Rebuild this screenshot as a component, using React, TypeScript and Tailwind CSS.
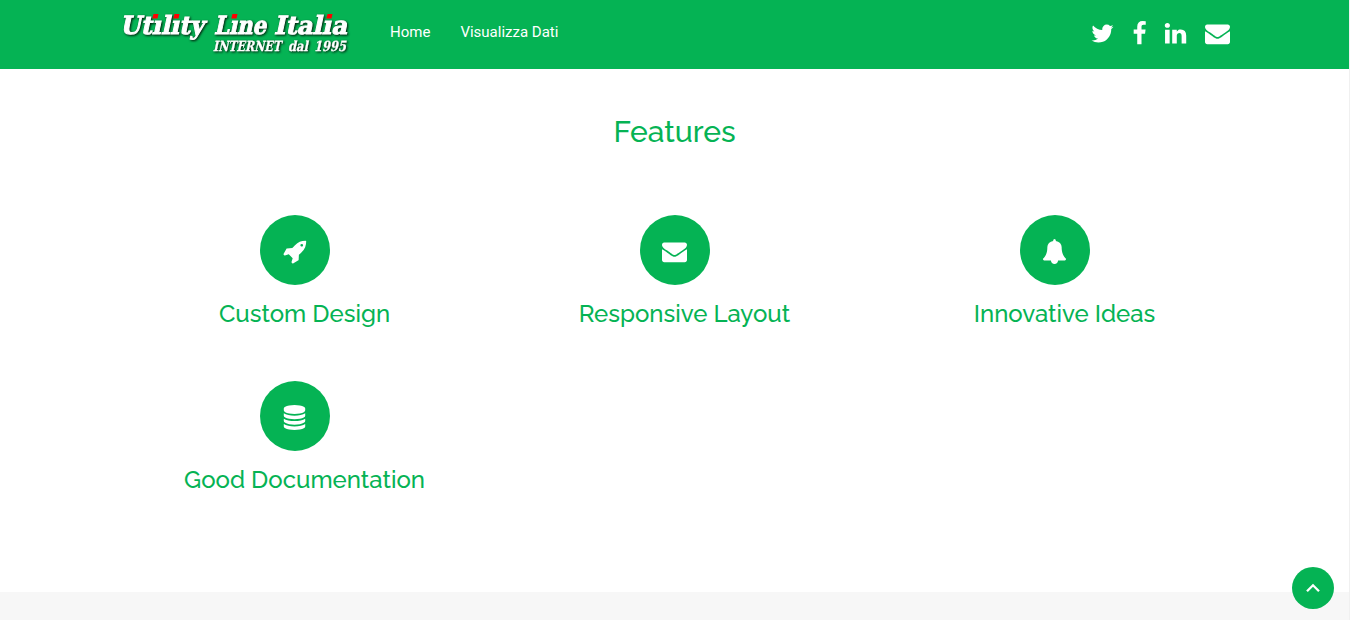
import React from "react";

const paths = {
  twitter:
    "M1684 408q-67 98-162 167 1 14 1 42 0 130-38 259.5t-115.5 248.5-184.5 210.5-258 146-323 54.5q-271 0-496-145 35 4 78 4 225 0 401-138-105-2-188-64.5t-114-159.5q33 5 61 5 43 0 85-11-112-23-185.5-111.5t-73.5-205.5v-4q68 38 146 41-66-44-105-115t-39-154q0-88 44-163 121 149 294.5 238.5t371.5 99.5q-8-38-8-74 0-134 94.5-228.5t228.5-94.5q140 0 236 102 109-21 205-78-37 115-142 178 93-10 186-50z",
  facebook:
    "M1343 12v264h-157q-86 0-116 36t-30 108v189h293l-39 296h-254v759h-306v-759h-255v-296h255v-218q0-186 104-288.5t277-102.5q147 0 228 12z",
  linkedin:
    "M477 625v991h-330v-991h330zm21-306q1 73-50.5 122t-135.5 49h-2q-82 0-132-49t-50-122q0-74 51.5-122.5t134.5-48.5 133 48.5 51 122.5zm1166 729v568h-329v-530q0-105-40.5-164.5t-126.5-59.5q-63 0-105.5 34.5t-63.5 85.5q-11 30-11 81v553h-329q2-399 2-647t-1-296l-1-48h329v144h-2q20-32 41-56t56.5-52 87-43.5 114.5-15.5q171 0 275 113.5t104 332.5z",
  envelope:
    "M1792 710v794q0 66-47 113t-113 47h-1472q-66 0-113-47t-47-113v-794q44 49 101 87 362 246 497 345 57 42 92.5 65.5t94.5 48 110 24.5h2q51 0 110-24.5t94.5-48 92.5-65.5q170-123 498-345 57-39 100-87zm0-294q0 79-49 151t-122 123q-376 261-468 325-10 7-42.5 31t-54 38.5-52 32.5-57.5 27-50 9h-2q-23 0-50-9t-57.5-27-52-32.5-54-38.5-42.5-31q-91-64-262-182.5t-205-142.5q-62-42-117-115.5t-55-136.5q0-78 41.5-130t118.5-52h1472q65 0 112.5 47t47.5 113z",
  rocket:
    "M1440 448q0-40-28-68t-68-28-68 28-28 68 28 68 68 28 68-28 28-68zm224-288q0 249-75.5 430.5t-253.5 360.5q-81 80-195 176l-20 379q-2 16-16 26l-384 224q-7 4-16 4-12 0-23-9l-64-64q-13-14-8-32l85-276-281-281-276 85q-3 1-9 1-14 0-23-9l-64-64q-17-19-5-39l224-384q10-14 26-16l379-20q96-114 176-195 188-187 358-258t431-71q14 0 24 9.5t10 22.5z",
  bell:
    "M1728 1408q0 52-38 90t-90 38h-448q0 106-75 181t-181 75-181-75-75-181h-448q-52 0-90-38t-38-90q50-42 91-88t85-119.5 74.5-158.5 50-206 19.5-260q0-152 117-282.5t307-158.5q-8-19-8-39 0-40 28-68t68-28 68 28 28 68q0 20-8 39 190 28 307 158.5t117 282.5q0 139 19.5 260t50 206 74.5 158.5 85 119.5 91 88z",
  database:
    "M896 768q237 0 443-43t325-127v170q0 69-103 128t-280 93.5-385 34.5-385-34.5-280-93.5-103-128v-170q119 84 325 127t443 43zm0 768q237 0 443-43t325-127v170q0 69-103 128t-280 93.5-385 34.5-385-34.5-280-93.5-103-128v-170q119 84 325 127t443 43zm0-384q237 0 443-43t325-127v170q0 69-103 128t-280 93.5-385 34.5-385-34.5-280-93.5-103-128v-170q119 84 325 127t443 43zm0-1152q208 0 385 34.5t280 93.5 103 128v128q0 69-103 128t-280 93.5-385 34.5-385-34.5-280-93.5-103-128v-128q0-69 103-128t280-93.5 385-34.5z",
};

type IconName = keyof typeof paths;

function Icon({ name, className = "" }: { name: IconName; className?: string }) {
  return (
    <svg viewBox="0 0 1792 1792" className={`h-[25px] w-[25px] shrink-0 fill-white ${className}`}>
      <path d={paths[name]} />
    </svg>
  );
}

const words = [
  { text: "Utılıty", x: 1, y: 25.5, width: 84, size: 25 },
  { text: "Lıne", x: 95, y: 25.5, width: 52, size: 25 },
  { text: "Italıa", x: 155, y: 25.5, width: 73, size: 25 },
  { text: "INTERNET", x: 94, y: 43, width: 68, size: 14 },
  { text: "dal", x: 169, y: 43, width: 20, size: 14 },
  { text: "1995", x: 195, y: 43, width: 32, size: 14 },
];

function Logo() {
  return (
    <svg viewBox="0 0 232 52" className="h-[52px] w-[232px] shrink-0" aria-label="Utility Line Italia">
      <g
        className="drop-shadow-[1.8px_1.8px_0.8px_#021a0a]"
        fontFamily='"DejaVu Serif Condensed", "DejaVu Serif", serif'
        fontWeight="bold"
      >
        {words.map((w) => (
          <text
            key={w.text}
            className={w.size > 20 ? "fill-white stroke-white stroke-[0.9]" : "fill-white stroke-white stroke-[0.3]"}
            transform={`translate(${w.x} ${w.y}) skewX(-12)`}
            fontSize={w.size}
            textLength={w.width}
            lengthAdjust="spacingAndGlyphs"
          >
            {w.text}
          </text>
        ))}
      </g>
      <g className="fill-[#ff0000]">
        {[33, 54, 112, 207].map((x) => (
          <path key={x} d={`M${x + 1.5} 6h5l-1 4.6h-5.2z`} />
        ))}
      </g>
    </svg>
  );
}

const features: { icon: IconName; title: string; offset: string }[] = [
  { icon: "rocket", title: "Custom Design", offset: "mt-[3px] ml-[2px]" },
  { icon: "envelope", title: "Responsive Layout", offset: "mt-[3px]" },
  { icon: "bell", title: "Innovative Ideas", offset: "mt-[3px]" },
  { icon: "database", title: "Good Documentation", offset: "mt-[3px]" },
];

export default function App() {
  return (
    <div className="flex h-[620px] w-full flex-col overflow-hidden border-r border-[#f0f0f0] bg-white font-[Roboto,sans-serif]">
      <header className="flex h-[69px] shrink-0 items-start bg-[#05b354] pl-[119px] pr-[119px]">
        <div className="pt-2">
          <Logo />
        </div>
        <nav className="flex gap-[30px] pl-[39px] pt-[21px] text-[15px] leading-[22px] text-white">
          <a href="#">Home</a>
          <a href="#">Visualizza Dati</a>
        </nav>
        <div className="ml-auto flex pt-[21px]">
          <Icon name="twitter" className="mr-[12.5px]" />
          <Icon name="facebook" className="mr-[11px]" />
          <Icon name="linkedin" className="mr-[17px]" />
          <Icon name="envelope" />
        </div>
      </header>
      <main className="h-[523px] shrink-0 font-[Raleway,Lato,sans-serif] text-[#05b354]">
        <h1 className="pt-[45px] text-center text-[30px] leading-[36px] font-medium">Features</h1>
        <div className="mx-auto grid w-[1140px] grid-cols-3 pt-[65px]">
          {features.map((f) => (
            <section key={f.title} className="flex h-[166px] flex-col items-center pl-[20px]">
              <div className="mr-[20px] flex h-[70px] w-[70px] items-center justify-center rounded-full bg-[#05b354]">
                <Icon name={f.icon} className={f.offset} />
              </div>
              <h2 className="mt-[14px] text-[24px] leading-[30px] font-medium whitespace-nowrap">{f.title}</h2>
            </section>
          ))}
        </div>
      </main>
      <div className="flex-1 bg-[#f7f7f7]" />
      <button
        aria-label="Back to top"
        className="fixed right-[16px] bottom-[11px] flex h-[42px] w-[42px] items-center justify-center rounded-full bg-[#05b354]"
      >
        <svg viewBox="0 0 14 10" className="h-[10px] w-[14px] fill-none stroke-white stroke-[2.3]">
          <path d="M1 8.3L7 2.3L13 8.3" />
        </svg>
      </button>
    </div>
  );
}
